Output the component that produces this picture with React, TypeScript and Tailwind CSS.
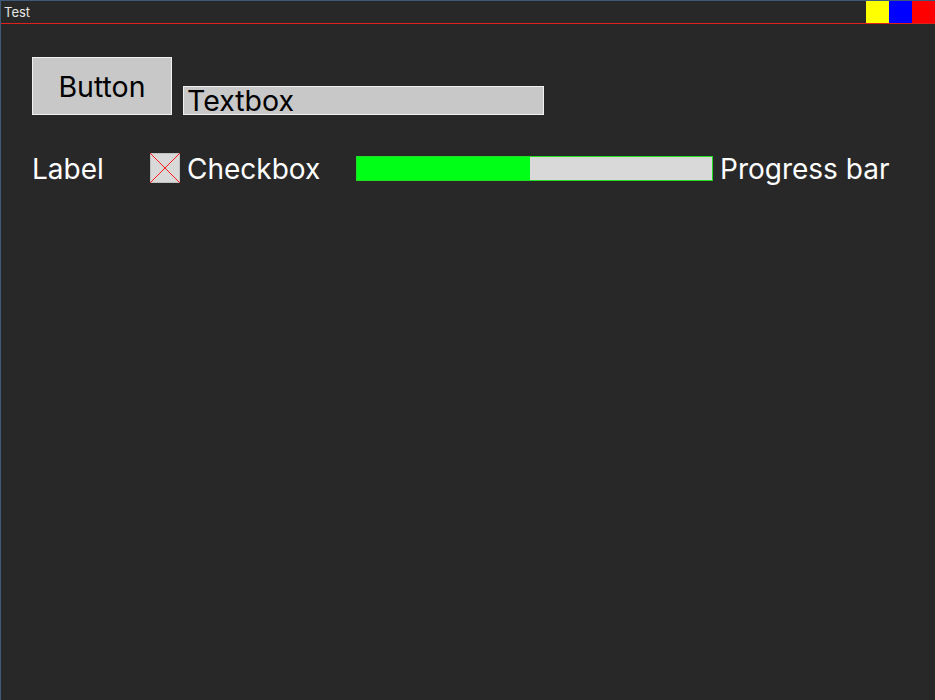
import React from "react";

function TitleBar() {
  return (
    <div className="flex flex-col">
      <div className="flex h-[22px] items-stretch">
        <div className="flex-1 pl-[3px] pt-[4px] text-[13px] leading-[15px] text-[#e6e6e6]">
          Test
        </div>
        <div className="w-[23px] bg-[#ffff00]" />
        <div className="w-[23px] bg-[#0000ff]" />
        <div className="w-[23px] bg-[#ff0000]" />
      </div>
      <div className="h-[1px] bg-[#e0201a]" />
    </div>
  );
}

function App() {
  const progress = 48.75;

  return (
    <div
      className="flex h-[700px] w-[935px] flex-col border-l border-t border-[#3d5a78] bg-[#282828]"
      style={{ fontFamily: "Inter, 'Noto Sans', sans-serif" }}
    >
      <TitleBar />

      <div className="flex flex-col pl-[31px] pt-[33px]">
        {/* Row 1 */}
        <div className="flex items-end gap-[11px]">
          <button className="flex h-[58px] w-[140px] items-center justify-center border border-[#f0f0f0] bg-[#c8c8c8] pt-[3px] text-[28.5px] text-black">
            Button
          </button>
          <div className="flex h-[29px] w-[361px] items-center border border-[#f0f0f0] bg-[#c8c8c8] pl-[3px] pt-[1px] text-[28.5px] leading-none text-black">
            Textbox
          </div>
        </div>

        {/* Row 2 */}
        <div className="mt-[38px] flex h-[30px] items-center text-[28px] text-white">
          <span className="w-[118px] pt-[2px]">Label</span>
          <svg width="30" height="30" viewBox="0 0 30 30" className="shrink-0">
            <rect x="0.5" y="0.5" width="29" height="29" fill="#d9d9d9" stroke="#c0c0c0" />
            <line x1="0" y1="0" x2="30" y2="30" stroke="#ff1a1a" strokeWidth="1" />
            <line x1="30" y1="0" x2="0" y2="30" stroke="#ff1a1a" strokeWidth="1" />
          </svg>
          <span className="ml-[7px] w-[169px] pt-[2px]">Checkbox</span>
          <div className="flex h-[25px] w-[357px] border border-[#22dd22] bg-[#d9d9d9]">
            <div className="h-full bg-[#00ff16]" style={{ width: `${progress}%` }} />
          </div>
          <span className="ml-[7px] pt-[2px]">Progress bar</span>
        </div>
      </div>
    </div>
  );
}

export default App;
